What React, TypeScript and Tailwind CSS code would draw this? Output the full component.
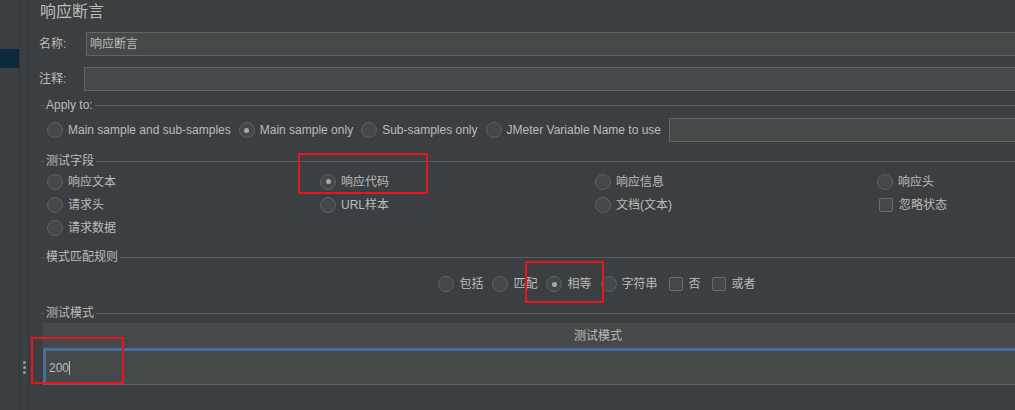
const font = "font-['Liberation_Sans','Noto_Sans_CJK_SC',sans-serif]"

function Radio({ checked = false }: { checked?: boolean }) {
  return (
    <span className="w-[16px] h-[16px] shrink-0 rounded-full border border-[#5e6162] bg-[#43494a] flex items-center justify-center">
      {checked && <span className="w-[5px] h-[5px] rounded-full bg-[#a9a9a9]" />}
    </span>
  )
}

function Check() {
  return <span className="w-[14px] h-[14px] shrink-0 rounded-[2px] border border-[#6b6b6b] bg-[#43494a]" />
}

function Opt({ label, checked, box }: { label: string; checked?: boolean; box?: boolean }) {
  return (
    <div className={`flex items-center h-[18px] whitespace-nowrap ${box ? "gap-[6px]" : "gap-[5px]"}`}>
      {box ? <Check /> : <Radio checked={checked} />}
      <span className="leading-[18px]">{label}</span>
    </div>
  )
}

function Titled({ title }: { title: string }) {
  return (
    <div className="flex items-center h-[16px]">
      <div className="w-[3px] h-px bg-[#5a5d5f]" />
      <span className="px-[2px] leading-[16px]">{title}</span>
      <div className="flex-1 h-px bg-[#5a5d5f]" />
    </div>
  )
}

export default function App() {
  return (
    <div className={`w-[1015px] h-[410px] overflow-hidden bg-[#3c3f41] text-[#bbbbbb] text-[12px] flex ${font}`}>
      {/* sidebar */}
      <div className="w-[19px] shrink-0 pt-[49px]">
        <div className="h-[19px] bg-[#0d293e]" />
      </div>
      <div className="w-px shrink-0 bg-[#323435]" />
      <div className="w-[8px] shrink-0 flex flex-col items-center gap-[2px] pt-[361px]">
        <div className="w-[3px] h-[3px] rounded-full bg-[#9a9a9a]" />
        <div className="w-[3px] h-[3px] rounded-full bg-[#9a9a9a]" />
        <div className="w-[3px] h-[3px] rounded-full bg-[#9a9a9a]" />
      </div>
      <div className="w-px shrink-0 bg-[#323435]" />

      {/* main */}
      <div className="w-[1124px] shrink-0 pl-[10px] flex flex-col">
        <div className="h-[24px] text-[16px] leading-[24px] pl-px">响应断言</div>

        <div className="mt-[8px] h-[24px] flex items-center">
          <span className="w-[47px] shrink-0">名称:</span>
          <div className="flex-1 h-[24px] bg-[#45494a] border border-[#646464] flex items-center px-[3px]">响应断言</div>
        </div>
        <div className="mt-[11px] h-[24px] flex items-center">
          <span className="w-[45px] shrink-0">注释:</span>
          <div className="flex-1 h-[24px] bg-[#45494a] border border-[#646464]" />
        </div>

        <div className="mt-[6px] pl-[2px]">
          <Titled title="Apply to:" />
          <div className="mt-[5px] h-[24px] flex items-center pl-[6px] gap-[8px]">
            <Opt label="Main sample and sub-samples" />
            <Opt label="Main sample only" checked />
            <Opt label="Sub-samples only" />
            <Opt label="JMeter Variable Name to use" />
            <div className="flex-1 h-[24px] bg-[#45494a] border border-[#646464]" />
          </div>
        </div>

        <div className="mt-[11px] pl-[2px]">
          <Titled title="测试字段" />
          <div className="mt-[1px] pl-[6px] grid grid-cols-[273px_275px_282px_1fr] auto-rows-[23px] items-center">
            <Opt label="响应文本" />
            <div className="relative">
              <Opt label="响应代码" checked />
              <div className="absolute left-[-22px] top-[-20px] w-[130px] h-[41px] border-2 border-[#e8141e]" />
            </div>
            <Opt label="响应信息" />
            <Opt label="响应头" />
            <Opt label="请求头" />
            <Opt label="URL样本" />
            <Opt label="文档(文本)" />
            <div className="pl-[2px]">
              <Opt label="忽略状态" box />
            </div>
            <Opt label="请求数据" />
          </div>
        </div>

        <div className="mt-[10px] pl-[2px]">
          <Titled title="模式匹配规则" />
          <div className="mt-[9px] h-[20px] flex items-center justify-center gap-[9px]">
            <Opt label="包括" />
            <Opt label="匹配" />
            <div className="relative">
              <Opt label="相等" checked />
              <div className="absolute left-[-21px] top-[-14px] w-[79px] h-[42px] border-2 border-[#e8141e]" />
            </div>
            <Opt label="字符串" />
            <div className="flex items-center gap-[11px] pl-[2px]">
              <Opt label="否" box />
              <Opt label="或者" box />
            </div>
          </div>
        </div>

        <div className="mt-[11px] pl-[2px]">
          <Titled title="测试模式" />
          <div className="relative mt-[2px] ml-[2px]">
            <div className="h-[25px] bg-[#45494a] flex items-center justify-center">测试模式</div>
            <div className="h-[37px] bg-[#45494a] border-t-[3px] border-l-[3px] border-[#4a6c98] border-b border-b-[#5e6162] flex items-center pl-[3px]">
              <span>200</span>
              <span className="w-px h-[14px] bg-[#bbbbbb]" />
            </div>
            <div className="absolute left-[-12px] top-[14px] w-[93px] h-[47px] border-2 border-[#e8141e]" />
          </div>
        </div>
      </div>
    </div>
  )
}
